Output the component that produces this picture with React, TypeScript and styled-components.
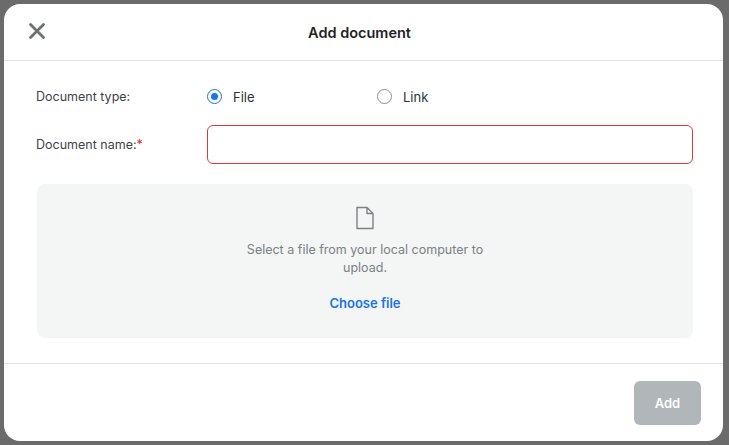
import React from "react";
import styled, { createGlobalStyle } from "styled-components";

const Global = createGlobalStyle`
  html, body { margin: 0; padding: 0; background: #6b6b6b; }
  body { font-family: Inter, "Noto Sans", sans-serif; }
`;

const Backdrop = styled.div`
  padding: 4px 6px 4px 4px;
  height: 445px;
  box-sizing: border-box;
`;
const Modal = styled.div`
  background: #fff;
  border-radius: 16px;
  height: 100%;
  display: flex;
  flex-direction: column;
`;
const Header = styled.div`
  height: 56px;
  border-bottom: 1px solid #e2e4e5;
  display: flex;
  align-items: center;
  justify-content: center;
  position: relative;
`;
const Close = styled.button`
  position: absolute;
  left: 22px;
  top: 16px;
  background: none;
  border: 0;
  padding: 0;
  width: 22px;
  height: 22px;
  display: flex;
`;
const Title = styled.div`
  font-weight: 600;
  font-size: 14.5px;
  color: #1f2324;
  margin-left: -8px;
`;
const Body = styled.div`
  flex: 1;
  padding: 15px 30px 0 32px;
  display: flex;
  flex-direction: column;
`;
const Row = styled.div<{ $h: number }>`
  display: grid;
  grid-template-columns: 171px 1fr;
  align-items: center;
  height: ${(p) => p.$h}px;
`;
const Label = styled.div`
  font-size: 12.5px;
  color: #3f4446;
`;
const Req = styled.span`
  color: #d92626;
`;
const Radios = styled.div`
  display: flex;
  align-items: center;
`;
const RadioItem = styled.label`
  display: flex;
  align-items: center;
  gap: 11px;
  width: 170px;
  font-size: 13px;
  color: #2f3436;
`;
const RadioCircle = styled.span<{ $on?: boolean }>`
  width: 15px;
  height: 15px;
  box-sizing: border-box;
  border-radius: 50%;
  border: 1.5px solid ${(p) => (p.$on ? "#1a73e8" : "#8a9093")};
  display: flex;
  align-items: center;
  justify-content: center;
  &::after {
    content: "";
    display: ${(p) => (p.$on ? "block" : "none")};
    width: 7px;
    height: 7px;
    border-radius: 50%;
    background: #1a73e8;
  }
`;
const Input = styled.div`
  height: 39px;
  box-sizing: border-box;
  border: 1px solid #d93b3b;
  border-radius: 6px;
`;
const Drop = styled.div`
  margin: 12px 0 0 1px;
  height: 154px;
  background: #f4f5f5;
  border-radius: 8px;
  display: flex;
  flex-direction: column;
  align-items: center;
  padding-top: 22px;
  box-sizing: border-box;
`;
const DropText = styled.div`
  margin-top: 11px;
  width: 260px;
  text-align: center;
  font-size: 12.5px;
  line-height: 18px;
  color: #7b8184;
`;
const Choose = styled.div`
  margin-top: 18px;
  font-size: 13px;
  font-weight: 600;
  color: #1a73e8;
`;
const Footer = styled.div`
  height: 77px;
  border-top: 1px solid #e2e4e5;
  display: flex;
  justify-content: flex-end;
  align-items: center;
  padding-right: 22px;
`;
const AddBtn = styled.button`
  width: 67px;
  height: 44px;
  border: 0;
  border-radius: 6px;
  background: #b1b7b9;
  color: #fff;
  font-weight: 600;
  font-size: 13px;
  font-family: inherit;
`;

export default function App() {
  return (
    <>
      <Global />
      <Backdrop>
        <Modal>
          <Header>
            <Close>
              <svg width="22" height="22" viewBox="0 0 22 22">
                <path d="M4.5 4.5L17.5 17.5M17.5 4.5L4.5 17.5" stroke="#6b7174" strokeWidth="2.8" strokeLinecap="round" />
              </svg>
            </Close>
            <Title>Add document</Title>
          </Header>
          <Body>
            <Row $h={41}>
              <Label>Document type:</Label>
              <Radios>
                <RadioItem><RadioCircle $on />File</RadioItem>
                <RadioItem><RadioCircle />Link</RadioItem>
              </Radios>
            </Row>
            <Row $h={55}>
              <Label>Document name:<Req>*</Req></Label>
              <Input />
            </Row>
            <Drop>
              <svg width="20" height="24" viewBox="0 0 20 24">
                <path d="M2 1.5H12L18 7.5V22.5H2Z M12 1.5V7.5H18" fill="none" stroke="#7b8184" strokeWidth="1.4" strokeLinejoin="round" />
              </svg>
              <DropText>Select a file from your local computer to upload.</DropText>
              <Choose>Choose file</Choose>
            </Drop>
          </Body>
          <Footer>
            <AddBtn>Add</AddBtn>
          </Footer>
        </Modal>
      </Backdrop>
    </>
  );
}
